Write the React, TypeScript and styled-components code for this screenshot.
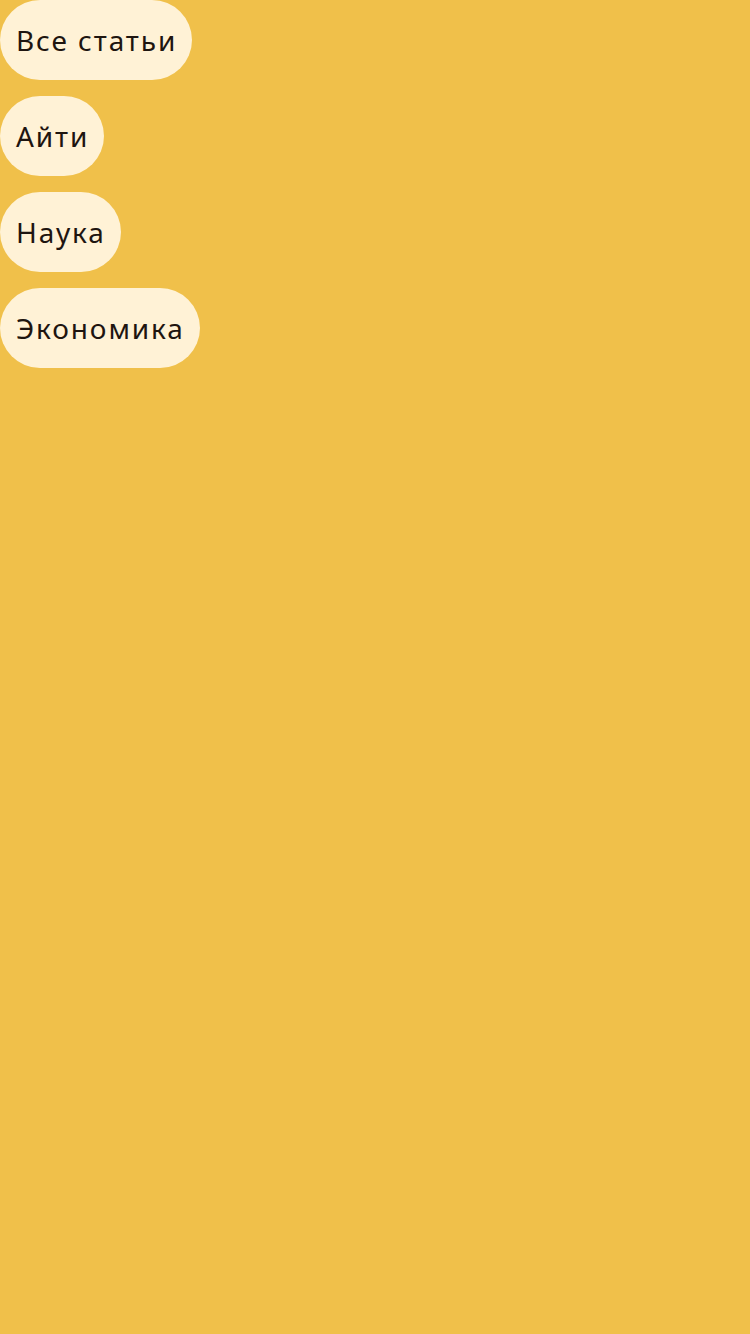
import styled, { createGlobalStyle } from 'styled-components'

const GlobalStyle = createGlobalStyle`
  html, body {
    margin: 0;
    padding: 0;
    background: #f0c04a;
  }
  body {
    font-family: 'Noto Sans', 'Liberation Sans', sans-serif;
  }
`

const Page = styled.div`
  min-height: 100vh;
  background: #f0c04a;
`

const CategoryList = styled.nav`
  display: flex;
  flex-direction: column;
  align-items: flex-start;
  gap: 16px;
`

const CategoryPill = styled.button`
  height: 80px;
  padding: 0 15px 0 16px;
  border: none;
  border-radius: 40px;
  background: #fff2d6;
  color: #1e1510;
  font-family: 'Noto Sans', 'Liberation Sans', sans-serif;
  font-size: 28px;
  font-weight: 400;
  letter-spacing: 1.9px;
  line-height: 80px;
  white-space: nowrap;
  cursor: pointer;
`

const categories = ['Все статьи', 'Айти', 'Наука', 'Экономика']

const App = () => {
  return (
    <Page>
      <GlobalStyle />
      <CategoryList>
        {categories.map((name) => (
          <CategoryPill key={name}>{name}</CategoryPill>
        ))}
      </CategoryList>
    </Page>
  )
}

export default App
